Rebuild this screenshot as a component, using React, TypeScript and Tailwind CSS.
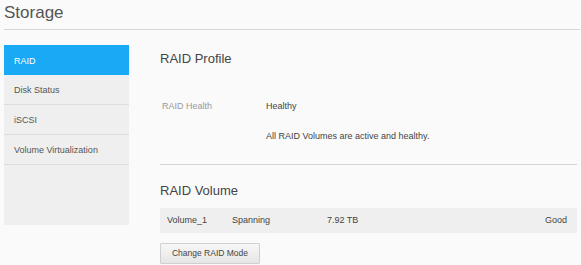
const navItems = ["RAID", "Disk Status", "iSCSI", "Volume Virtualization"];

function Sidebar() {
  return (
    <div className="w-[125px] h-[180px] bg-[#efefef] shrink-0">
      {navItems.map((item, i) => (
        <div
          key={item}
          className={
            i === 0
              ? "h-[30px] flex items-center pl-[10px] pt-[3px] bg-[#1aa9f5] text-white text-[9px]"
              : "h-[30px] flex items-center pl-[10px] pt-[3px] border-b border-[#dddddd] text-[#555] text-[9px]"
          }
        >
          {item}
        </div>
      ))}
    </div>
  );
}

export default function App() {
  return (
    <div
      className="w-[581px] h-[265px] overflow-hidden bg-[#fafafa] pl-[4px] pr-[1px]"
      style={{ fontFamily: '"Liberation Sans", Arial, sans-serif' }}
    >
      <div className="h-[30px] border-b border-[#d6d6d6] flex items-center pb-[4px]">
        <h1 className="text-[17px] leading-[20px] text-[#555]">Storage</h1>
      </div>
      <div className="flex mt-[15px]">
        <Sidebar />
        <div className="ml-[31px] w-[417px]">
          <h2 className="mt-[6px] text-[13px] leading-[16px] text-[#444]">RAID Profile</h2>
          <div className="mt-[33px] flex text-[9px] leading-[12px]">
            <span className="w-[106px] pl-[2px] text-[#999]">RAID Health</span>
            <div className="text-[#444]">
              <div>Healthy</div>
              <div className="mt-[18px]">All RAID Volumes are active and healthy.</div>
            </div>
          </div>
          <div className="mt-[22px] border-t border-[#d6d6d6]" />
          <h2 className="mt-[18px] text-[13px] leading-[16px] text-[#444]">RAID Volume</h2>
          <div className="mt-[9px] h-[25px] bg-[#efefef] flex items-center px-[7px] text-[9px] text-[#444]">
            <span className="w-[65px]">Volume_1</span>
            <span className="w-[95px]">Spanning</span>
            <span className="flex-1">7.92 TB</span>
            <span className="pr-[3px]">Good</span>
          </div>
          <button className="mt-[10px] w-[100px] h-[21px] border border-[#cfcfcf] rounded-[1px] bg-gradient-to-b from-[#f7f7f7] to-[#e6e6e6] text-[8.5px] text-[#444] flex items-center justify-center">
            Change RAID Mode
          </button>
        </div>
      </div>
    </div>
  );
}
